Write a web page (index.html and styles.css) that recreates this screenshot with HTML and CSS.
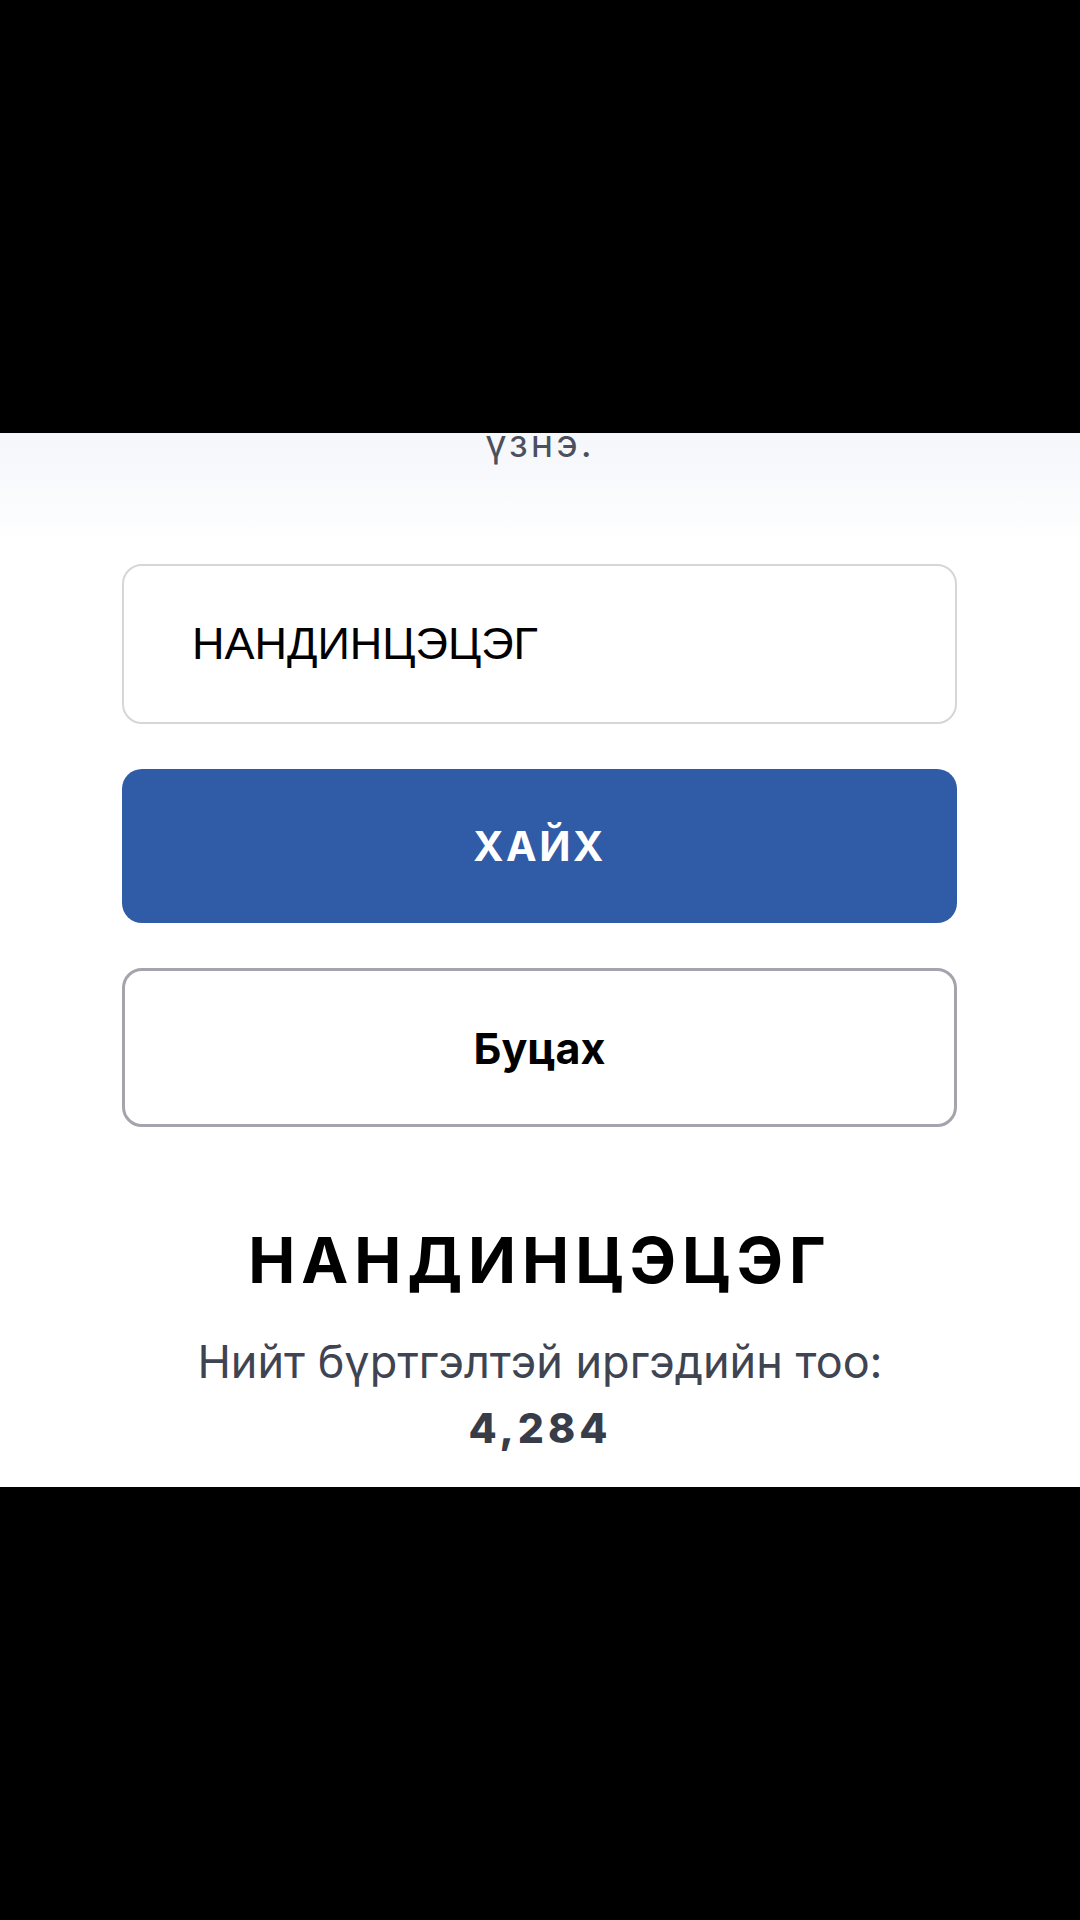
FILE: index.html
```html
<!DOCTYPE html>
<html lang="mn">
<head>
<meta charset="utf-8">
<link rel="stylesheet" href="styles.css">
</head>
<body>
<div class="screen">
  <div class="top-black"></div>
  <main class="sheet">
    <div class="card-tail">
      <p class="card-text">үзнэ.</p>
    </div>
    <div class="form">
      <div class="input">НАНДИНЦЭЦЭГ</div>
      <button class="btn btn-primary">ХАЙХ</button>
      <button class="btn btn-outline">Буцах</button>
    </div>
    <section class="result">
      <h1 class="result-name">НАНДИНЦЭЦЭГ</h1>
      <p class="result-label">Нийт бүртгэлтэй иргэдийн тоо:</p>
      <p class="result-count">4,284</p>
    </section>
  </main>
  <div class="bottom-black"></div>
</div>
</body>
</html>
```

FILE: styles.css
```css
html, body {
  margin: 0;
  padding: 0;
  background: #000;
  font-family: Inter, "Liberation Sans", Arial, sans-serif;
}
.screen {
  width: 1080px;
  height: 1920px;
  display: flex;
  flex-direction: column;
}
.top-black {
  height: 433px;
  background: #000;
}
.sheet {
  height: 1054px;
  background: #fff;
  overflow: hidden;
  display: flex;
  flex-direction: column;
}
.bottom-black {
  flex: 1;
  background: #000;
}
.card-tail {
  height: 110px;
  background: linear-gradient(180deg, #f5f7fb 0%, #f8f9fc 40%, #ffffff 100%);
  display: flex;
  justify-content: center;
  align-items: flex-start;
}
.card-text {
  margin: 0;
  font-size: 38px;
  line-height: 20px;
  height: 20px;
  letter-spacing: 3px;
  color: #4b505c;
  text-align: center;
}
.form {
  margin-top: 21px;
  padding: 0 123px 0 122px;
  display: flex;
  flex-direction: column;
  gap: 45px;
}
.input {
  height: 160px;
  box-sizing: border-box;
  border: 2px solid #d6d6da;
  border-radius: 20px;
  padding: 0 68px;
  display: flex;
  align-items: center;
  font-family: "Liberation Sans", Arial, sans-serif;
  font-size: 45px;
  color: #000;
}
.btn {
  display: block;
  width: 100%;
  box-sizing: border-box;
  border-radius: 20px;
  font-family: Inter, "Liberation Sans", Arial, sans-serif;
  font-weight: 700;
  font-size: 41px;
  cursor: pointer;
}
.btn-primary {
  height: 154px;
  background: #2f5ba7;
  color: #fff;
  border: none;
  letter-spacing: 2.5px;
}
.btn-outline {
  height: 159px;
  background: #fff;
  color: #000;
  border: 3px solid #a4a4ad;
  font-size: 43px;
}
.result {
  margin-top: 95px;
  text-align: center;
}
.result-name {
  margin: 0;
  font-size: 63px;
  line-height: 76px;
  font-weight: 700;
  letter-spacing: 6px;
  color: #000;
}
.result-label {
  margin: 36px 0 0;
  font-size: 45px;
  line-height: 56px;
  color: #3f4452;
}
.result-count {
  margin: 13px 0 0;
  font-size: 41px;
  line-height: 50px;
  font-weight: 800;
  letter-spacing: 4px;
  color: #373c48;
}
```
